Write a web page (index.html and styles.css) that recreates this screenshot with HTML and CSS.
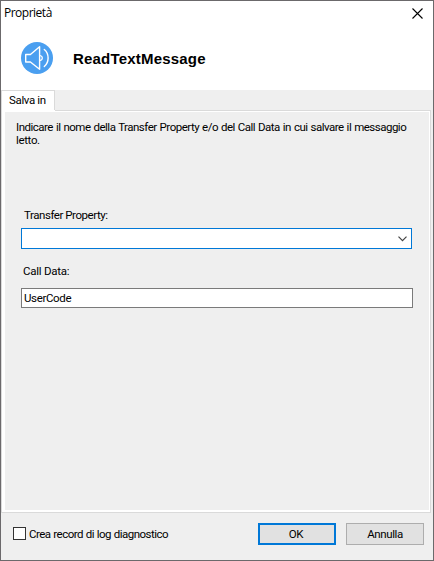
FILE: index.html
```html
<!DOCTYPE html>
<html lang="it">
<head>
<meta charset="utf-8">
<title>Proprietà</title>
<link rel="stylesheet" href="styles.css">
</head>
<body>
<main class="window">
  <header class="header">
    <div class="titlebar">
      <span class="caption">Proprietà</span>
      <svg class="close" width="11" height="11" viewBox="0 0 11 11"><path d="M.5 .5l10 10M10.5 .5l-10 10" fill="none" stroke="#000" stroke-width="1.1"/></svg>
    </div>
    <div class="banner">
      <svg class="speaker" width="32" height="32" viewBox="0 0 32 32">
        <circle cx="16" cy="16" r="16" fill="#4a9ff0"/>
        <g fill="none" stroke="#fff" stroke-width="1.4" stroke-linejoin="round" stroke-linecap="round">
          <path d="M4.7 12.5h4.7L18.6 4.7v22.6L9.4 20H4.7z"/>
          <path d="M19 13.5q2.3 .4 2.3 2.5t-2.3 2.5" stroke-width="1.2"/>
          <path d="M23.3 7.5q3.8 3.2 3.8 8.5t-3.8 8.5"/>
        </g>
      </svg>
      <h1 class="heading">ReadTextMessage</h1>
    </div>
  </header>
  <nav class="tabs">
    <div class="tab"><span class="tab-label">Salva in</span></div>
    <div class="tab-rest"></div>
  </nav>
  <section class="pane">
    <p class="hint"><span class="hint-first">Indicare il nome della Transfer Property e/o del Call Data in cui salvare il messaggio</span><br>letto.</p>
    <div class="label label-transfer">Transfer Property:</div>
    <div class="combo">
      <svg width="9" height="6" viewBox="0 0 9 6"><path d="M.5 .7l4 4 4-4" fill="none" stroke="#444" stroke-width="1.2"/></svg>
    </div>
    <div class="label label-data">Call Data:</div>
    <div class="field"><span class="value">UserCode</span></div>
  </section>
  <footer class="footer">
    <span class="checkbox"></span>
    <span class="check-label">Crea record di log diagnostico</span>
    <div class="button primary"><span class="ok">OK</span></div>
    <div class="button"><span class="cancel">Annulla</span></div>
  </footer>
</main>
</body>
</html>
```
FILE: styles.css
```css
* { box-sizing: border-box; }
body { margin: 0; }
.window {
  width: 434px;
  height: 561px;
  border: 1px solid #6b696b;
  background: #efefef;
  color: #000;
  font: 11.5px/13px Roboto, "Liberation Sans", sans-serif;
  letter-spacing: -.35px;
  white-space: nowrap;
  display: flex;
  flex-direction: column;
}
.header { height: 89px; background: #fff; }
.titlebar {
  height: 24px;
  padding: 0 10px 0 3px;
  display: flex;
  align-items: center;
  justify-content: space-between;
}
.caption { font: 12px/16px "Open Sans", "Noto Sans", sans-serif; letter-spacing: -.5px; }
.banner { display: flex; align-items: center; padding: 17px 0 0 20px; }
.heading {
  margin: 1px 0 0 20px;
  font: bold 15px/18px "Liberation Sans", Arial, sans-serif;
  letter-spacing: .2px;
}
.tabs { display: flex; height: 20px; }
.tab {
  width: 54px;
  background: #fff;
  border: 1px solid #dadada;
  border-bottom: 0;
  padding: 3px 0 0 7px;
}
.tab-rest {
  width: 376px;
  border-bottom: 1px solid #dadada;
  margin-bottom: -1px;
  position: relative;
}
.pane {
  width: 430px;
  height: 403px;
  border: solid #dadada;
  border-width: 0 1px 1px;
  box-shadow: inset 3px 0 #fff, inset -1px 0 #fff, inset 0 -2px #fff, inset 0 2px #fff;
  padding: 11px 0 0 14px;
}
.hint { margin: 0; height: 88px; }
.hint-first { letter-spacing: -.5px; word-spacing: .6px; }
.label { height: 13px; letter-spacing: -.45px; }
.label-transfer { margin-left: 8px; }
.combo {
  width: 391px;
  height: 21px;
  margin: 6px 0 0 5px;
  border: 1px solid #0078d7;
  background: #fff;
  display: flex;
  align-items: center;
  justify-content: flex-end;
  padding-right: 4px;
}
.label-data { margin: 16px 0 0 7px; letter-spacing: -.25px; }
.field {
  width: 392px;
  height: 20px;
  margin: 10px 0 0 5px;
  border: 1px solid #7a7a7a;
  background: #fff;
  padding: 3px 0 0 2px;
}
.footer { display: flex; padding: 10px 0 0 12px; }
.checkbox { width: 13px; height: 13px; border: 1px solid #333; background: #fff; margin-top: 4px; }
.check-label { width: 229px; margin: 5px 0 0 3px; letter-spacing: -.53px; word-spacing: .5px; }
.ok { margin-right: 2px; }
.cancel { letter-spacing: -.4px; }
.button {
  width: 78px;
  height: 22px;
  border: 1px solid #adadad;
  background: #e1e1e1;
  display: flex;
  align-items: center;
  justify-content: center;
}
.primary { border: 2px solid #0078d7; margin-right: 10px; }
```
